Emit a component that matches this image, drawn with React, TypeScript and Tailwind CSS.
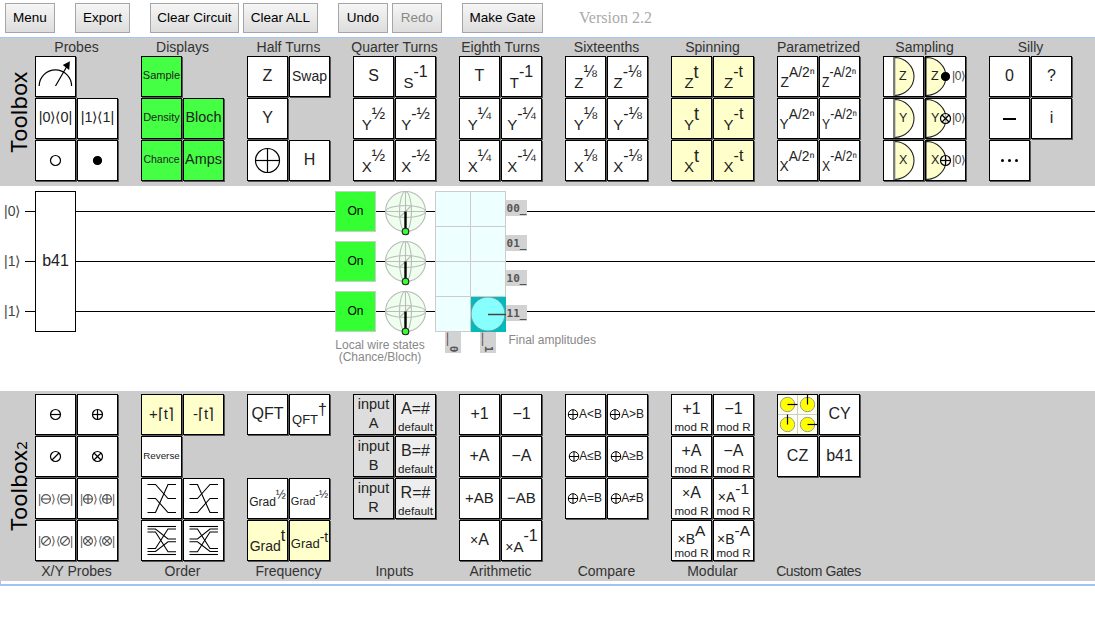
import React from 'react';

type Tone = 'white' | 'green' | 'yellow' | 'gray' | 'light';
type Cell = { node: React.ReactNode; tone?: Tone } | null;

const TONES: Record<Tone, string> = {
  white: 'bg-white',
  green: 'bg-[#44ff44]',
  yellow: 'bg-[#ffffcc]',
  gray: 'bg-[#dddddd]',
  light: 'bg-[#eeeeee]',
};

const SIZES: Record<number, string> = {
  9: 'text-[9.8px]',
  10: 'text-[10.5px]',
  11: 'text-[11px]',
  12: 'text-[12px]',
  13: 'text-[13px]',
  14: 'text-[14px]',
  14.5: 'text-[14.4px]',
  15: 'text-[15px]',
  16: 'text-[16px]',
  18: 'text-[18px]',
};

function Text({ children, size = 16 }: { children: React.ReactNode; size?: number }) {
  return <span className={`${SIZES[size]} -translate-y-px leading-none whitespace-pre`}>{children}</span>;
}

type Lift = 'normal' | 'low' | 'tight';

const BASE_SHIFT: Record<Lift, string> = {
  normal: 'translate-y-[5.5px]',
  low: 'translate-y-[5px]',
  tight: 'translate-y-[3px]',
};

const SUP_SHIFT: Record<Lift, string> = {
  normal: '-translate-y-[5px]',
  low: '-translate-y-[5px]',
  tight: '-translate-y-[4px]',
};

function Power({ base, sup, size = 15, supSize = size, lift = 'normal' }: { base: React.ReactNode; sup: React.ReactNode; size?: number; supSize?: number; lift?: Lift }) {
  return (
    <span className="flex items-center leading-none whitespace-pre">
      <span className={`${SIZES[size]} ${BASE_SHIFT[lift]}`}>{base}</span>
      <span className={`${SIZES[supSize]} ${SUP_SHIFT[lift]}`}>{sup}</span>
    </span>
  );
}

function Stack({ top, bottom, even }: { top: React.ReactNode; bottom: string; even?: boolean }) {
  return (
    <span className={`flex h-full flex-col items-center leading-none whitespace-nowrap ${even ? 'pt-px' : 'pt-[6px]'}`}>
      <span className={`flex items-center ${even ? 'h-[16px] text-[14.5px]' : 'h-[15px] text-[16px]'}`}>{top}</span>
      <span className={`flex items-center ${even ? 'h-[22px] text-[14.5px]' : 'mt-[5px] h-[12px] text-[11.6px]'}`}>{bottom}</span>
    </span>
  );
}

type Mark = 'empty' | 'full' | 'minus' | 'plus' | 'slash' | 'cross';

function MarkShape({ kind, cx, cy, r }: { kind: Mark; cx: number; cy: number; r: number }) {
  const d = r * 0.707;
  return (
    <g stroke="currentColor" strokeWidth="1.2" fill="none">
      <circle cx={cx} cy={cy} r={r} fill={kind === 'full' ? 'black' : 'white'} />
      {(kind === 'minus' || kind === 'plus') && <path d={`M${cx - r} ${cy}h${2 * r}`} />}
      {kind === 'plus' && <path d={`M${cx} ${cy - r}v${2 * r}`} />}
      {(kind === 'slash' || kind === 'cross') && <path d={`M${cx - d} ${cy + d}L${cx + d} ${cy - d}`} />}
      {kind === 'cross' && <path d={`M${cx - d} ${cy - d}L${cx + d} ${cy + d}`} />}
    </g>
  );
}

function Control({ kind, r = 5 }: { kind: Mark; r?: number }) {
  return (
    <svg width="39" height="39" viewBox="1 1 39 39" className="text-black">
      <MarkShape kind={kind} cx={20.5} cy={20.5} r={r} />
    </svg>
  );
}

function Meter() {
  return (
    <svg width="39" height="39" viewBox="1 1 39 39" fill="none" stroke="black">
      <path d="M4.200 30A16.200 16.200 0 0 1 36.600 30M20.500 30L31.500 11" strokeWidth="1.2" />
      <path d="M34.900 5.200L34.200 14L27.800 9Z" fill="black" stroke="none" />
    </svg>
  );
}

function Swaps({ lines }: { lines: number[][] }) {
  return (
    <svg width="39" height="39" viewBox="1 1 39 39" fill="none" stroke="black" strokeWidth="1.1">
      {lines.map(([a, b]) => (
        <path key={a} d={`M6.500 ${a}H14.500L27 ${b}H35`} />
      ))}
    </svg>
  );
}

function Sampler({ letter, mark }: { letter: string; mark?: Mark }) {
  const left = mark ? 1 : 11;
  return (
    <span className="relative block size-[39px]">
      <svg width="39" height="39" viewBox="1 1 39 39" className="block text-black">
        <path d={`M${left} 1.500A20 19 0 0 1 ${left} 39.500Z`} fill="#ffffcc" stroke="#222" strokeWidth="1.1" />
        {!mark && <path d="M11.500 1V40" stroke="#777" strokeWidth="1.6" />}
        {mark && (
          <g fillOpacity={mark === 'full' ? 1 : 0.6}>
            <MarkShape kind={mark} cx={20.5} cy={20.5} r={mark === 'full' ? 4 : 5} />
          </g>
        )}
      </svg>
      <span className={`absolute top-[13px] text-[12.5px] leading-none text-[#222] ${mark ? 'left-[5px]' : 'left-[15px]'}`}>{letter}</span>
      {mark && <span className="absolute top-[13px] left-[26px] text-[12px] leading-none tracking-[-0.4px] text-[#444]">|0⟩</span>}
    </span>
  );
}

function MatrixGate() {
  const dots = [
    [10.5, 10.5, 10, 0],
    [30.5, 10.5, 0, -10],
    [10.5, 30.5, 0, -10],
    [30.5, 30.5, 10, 0],
  ];
  return (
    <svg width="39" height="39" viewBox="1 1 39 39" fill="none">
      <path d="M0 0H41V41H0Z" fill="#fffff0" />
      <path d="M20.500 0V41M0 20.500H41" stroke="#ccc" />
      {dots.map(([x, y, dx, dy]) => (
        <g key={`${x}-${y}`}>
          <circle cx={x} cy={y} r="7.2" fill="yellow" stroke="#999" />
          <path d={`M${x} ${y}l${dx} ${dy}`} stroke="black" strokeWidth="1.2" />
        </g>
      ))}
    </svg>
  );
}

function Projector({ kind }: { kind: Mark }) {
  return (
    <span className="flex items-center text-[12px] leading-none text-[#555]">
      <span>|</span>
      <svg width="10" height="10" viewBox="0 0 10 10"><MarkShape kind={kind} cx={5} cy={5} r={4.4} /></svg>
      <span className="-mx-[0.5px]">⟩⟨</span>
      <svg width="10" height="10" viewBox="0 0 10 10"><MarkShape kind={kind} cx={5} cy={5} r={4.4} /></svg>
      <span>|</span>
    </span>
  );
}

const t = (s: React.ReactNode, size = 16, tone: Tone = 'white'): Cell => ({ node: <Text size={size}>{s}</Text>, tone });
const p = (base: React.ReactNode, sup: React.ReactNode, size = 15, tone: Tone = 'white', supSize = 16, lift: Lift = 'normal'): Cell => ({
  node: <Power base={base} sup={sup} size={size} supSize={supSize} lift={lift} />,
  tone,
});
const c = (kind: Mark, r = 5): Cell => ({ node: <Control kind={kind} r={r} /> });
const proj = (kind: Mark): Cell => ({ node: <Projector kind={kind} /> });
const sw = (lines: number[][]): Cell => ({ node: <Swaps lines={lines} /> });
const inp = (v: string): Cell => ({ node: <Stack top="input" bottom={v} even />, tone: 'gray' });
const def = (v: string): Cell => ({ node: <Stack top={v} bottom="default" />, tone: 'light' });
const mod = (v: React.ReactNode): Cell => ({ node: <Stack top={v} bottom="mod R" /> });
const oplus = (s: string): Cell => ({
  node: (
    <span className="flex -translate-x-[0.5px] items-center text-[12px] leading-none">
      <svg width="11" height="11" viewBox="0 0 11 11" fill="none" stroke="black"><circle cx="5.5" cy="5.5" r="4.800" /><path d="M5.500 0.500V10.500M0.500 5.500H10.500" /></svg>
      <span className="-translate-y-px">{s}</span>
    </span>
  ),
});
const times = (letter: string) => (
  <>
    <span className="text-[14px]">×</span>
    {letter}
  </>
);
const modPow = (base: string, sup: string) => (
  <span className="flex items-center">
    <span className="flex translate-y-[4px] text-[14px]">×{base}</span>
    <span className="-translate-y-[4px] text-[15.5px]">{sup}</span>
  </span>
);
const param = (base: string, negative: boolean): Cell => ({
  node: (
    <span className={negative ? 'scale-x-[0.81]' : 'scale-x-[0.92]'}>
      <Power base={base} sup={negative ? '-A/2ⁿ' : 'A/2ⁿ'} size={15} supSize={15} lift="low" />
    </span>
  ),
});

type Group = { name: string; cells: Cell[]; narrow?: boolean };

const TOP: Group[] = [
  { name: 'Probes', cells: [{ node: <Meter /> }, null, t('|0⟩⟨0|', 14.5), t('|1⟩⟨1|', 14.5), c('empty'), c('full', 4)] },
  { name: 'Displays', cells: [t('Sample', 11, 'green'), null, t('Density', 11, 'green'), t('Bloch', 14.5, 'green'), t('Chance', 10, 'green'), t('Amps', 14.5, 'green')] },
  { name: 'Half Turns', cells: [t('Z'), t('Swap', 14), t('Y'), null, c('plus', 12), t('H')] },
  { name: 'Quarter Turns', cells: [t('S'), p('S', '-1'), p('Y', '½'), p('Y', '-½'), p('X', '½'), p('X', '-½')] },
  { name: 'Eighth Turns', cells: [t('T'), p('T', '-1'), p('Y', '¼'), p('Y', '-¼'), p('X', '¼'), p('X', '-¼')] },
  { name: 'Sixteenths', cells: [p('Z', '⅛'), p('Z', '-⅛'), p('Y', '⅛'), p('Y', '-⅛'), p('X', '⅛'), p('X', '-⅛')] },
  { name: 'Spinning', cells: ['Z', 'Y', 'X'].flatMap((l) => [p(l, 't', 15, 'yellow', 18), p(l, '-t', 15, 'yellow')]) },
  { name: 'Parametrized', cells: ['Z', 'Y', 'X'].flatMap((l) => [param(l, false), param(l, true)]) },
  {
    name: 'Sampling',
    cells: [
      { node: <Sampler letter="Z" /> }, { node: <Sampler letter="Z" mark="full" /> },
      { node: <Sampler letter="Y" /> }, { node: <Sampler letter="Y" mark="cross" /> },
      { node: <Sampler letter="X" /> }, { node: <Sampler letter="X" mark="plus" /> },
    ],
  },
  {
    name: 'Silly',
    cells: [
      t('0'), t('?'),
      { node: <span className="h-[2px] w-[13px] bg-black" /> }, t('i'),
      { node: <span className="flex gap-[4px]">{[0, 1, 2].map((i) => <span key={i} className="size-[3px] rounded-full bg-black" />)}</span> }, null,
    ],
  },
];

const SHUFFLE = [[6.5, 6.5], [9, 19], [12, 31.7], [28.5, 9], [31.5, 21.7], [34.5, 34.5]];

const BOTTOM: Group[] = [
  { name: 'X/Y Probes', cells: [c('minus'), c('plus'), c('slash'), c('cross'), proj('minus'), proj('plus'), proj('slash'), proj('cross')] },
  {
    name: 'Order',
    cells: [
      t('+⌈t⌉', 15, 'yellow'), t('-⌈t⌉', 15, 'yellow'), t('Reverse', 9), null,
      sw([[6.5, 20.5], [20.5, 34.5], [34.5, 6.5]]), sw([[6.5, 34.5], [20.5, 6.5], [34.5, 20.5]]),
      sw(SHUFFLE), sw(SHUFFLE.map(([a, b]) => [b, a])),
    ],
  },
  {
    name: 'Frequency',
    cells: [
      t('QFT'), p('QFT', '†', 13, 'white', 16, 'low'), null, null,
      p('Grad', '½', 12, 'white', 12, 'tight'), p('Grad', '-½', 11, 'white', 11, 'tight'),
      p('Grad', 't', 14, 'yellow', 16, 'low'), p('Grad', '-t', 13, 'yellow', 14, 'tight'),
    ],
  },
  { name: 'Inputs', cells: [inp('A'), def('A=#'), inp('B'), def('B=#'), inp('R'), def('R=#')] },
  { name: 'Arithmetic', cells: [t('+1'), t('−1'), t('+A'), t('−A'), t('+AB', 15), t('−AB', 15), t(times('A')), p(times('A'), '-1', 15)] },
  { name: 'Compare', cells: ['A<B', 'A>B', 'A≤B', 'A≥B', 'A=B', 'A≠B'].map(oplus) },
  { name: 'Modular', cells: [mod('+1'), mod('−1'), mod('+A'), mod('−A'), mod(<span>{times('A')}</span>), mod(modPow('A', '-1')), mod(modPow('B', 'A')), mod(modPow('B', '-A'))] },
  { name: 'Custom Gates', narrow: true, cells: [{ node: <MatrixGate /> }, t('CY'), t('CZ'), t('b41')] },
];

function Gate({ cell }: { cell: Cell }) {
  if (!cell) return <span className="size-[41px]" />;
  return (
    <span className={`flex size-[41px] items-center justify-center border border-black text-[#222] shadow-[1px_1px_0_#555] ${TONES[cell.tone ?? 'white']}`}>
      {cell.node}
    </span>
  );
}

function Gates({ cells }: { cells: Cell[] }) {
  return (
    <div className="grid grid-cols-[41px_41px] gap-px">
      {cells.map((cell, i) => <Gate key={i} cell={cell} />)}
    </div>
  );
}

function Heading({ group }: { group: Group }) {
  return (
    <h2 className={`flex h-[19px] items-center justify-center text-[14px] whitespace-nowrap text-[#333] ${group.narrow ? 'tracking-[-0.4px]' : ''}`}>
      {group.name}
    </h2>
  );
}

function SideLabel({ sub }: { sub?: string }) {
  return (
    <div className="flex w-[35px] shrink-0 items-center justify-center">
      <span className="-rotate-90 font-['Noto_Sans'] text-[22px] leading-none whitespace-nowrap">
        Toolbox{sub && <span className="text-[15px]">{sub}</span>}
      </span>
    </div>
  );
}

function Button({ label, width, disabled }: { label: string; width: string; disabled?: boolean }) {
  return (
    <button disabled={disabled} className={`h-[30px] shrink-0 border border-[#a6a6a6] bg-linear-to-b from-[#f6f6f6] to-[#dddddd] pt-px text-[13.5px] whitespace-nowrap ${width} ${disabled ? 'text-[#888888]' : 'text-black'}`}>
      {label}
    </button>
  );
}

function Bloch() {
  return (
    <svg width="42" height="46" viewBox="0 0 42 46" fill="none" stroke="#bbb" strokeWidth="1.1">
      <circle cx="21.500" cy="20.500" r="20" fill="#eeffee" />
      <ellipse cx="21.500" cy="20.500" rx="20" ry="6" />
      <ellipse cx="21.500" cy="20.500" rx="6" ry="20" />
      <path d="M1.500 20.500H41.500M21.500 0.500V40.500M15.500 26.500L27.500 14.500" />
      <path d="M21.500 20.500V40" stroke="black" strokeWidth="2.400" />
      <circle cx="21.500" cy="40.500" r="3.300" fill="#33ff33" stroke="#222" />
    </svg>
  );
}

function WireState() {
  return (
    <div className="flex h-[50px] items-start">
      <span className="flex size-[41px] items-center justify-center border border-[#ccc] bg-[#33ff33] pb-px text-[12px]">On</span>
      <span className="ml-[8px]"><Bloch /></span>
    </div>
  );
}

function StateTag({ text, vertical }: { text: string; vertical?: boolean }) {
  return (
    <span className={`flex items-center justify-center bg-[#d2d2d2] font-['DejaVu_Sans_Mono'] text-[11px] leading-none font-bold text-[#555] ${vertical ? 'h-[21px] w-[16px]' : 'h-[16px] w-[21px]'}`}>
      <span className={vertical ? 'translate-x-px rotate-90' : ''}>{text}</span>
    </span>
  );
}

function Amplitudes() {
  return (
    <div className="flex items-start">
      <div className="flex flex-col">
        <div className="grid grid-cols-[35px_35px] grid-rows-[35px_35px_35px_35px] border-t border-l border-[#ccc]">
          {[0, 1, 2, 3, 4, 5, 6].map((i) => <span key={i} className="border-r border-b border-[#ccc] bg-[#eeffff]" />)}
          <svg width="35" height="35" viewBox="0 0 35 35">
            <path d="M0 0H35V35H0Z" fill="#00bbbb" />
            <circle cx="17" cy="17" r="17" fill="#88ffff" stroke="#6a9a9a" />
            <path d="M17 17.500H35" stroke="#444" strokeWidth="1.500" />
          </svg>
        </div>
        <div className="flex gap-[19px] pl-[10px]">
          <StateTag text="__0" vertical />
          <StateTag text="__1" vertical />
        </div>
      </div>
      <div className="flex flex-col gap-[19px] pt-[9px]">
        {['00_', '01_', '10_', '11_'].map((s) => <StateTag key={s} text={s} />)}
      </div>
    </div>
  );
}

function Circuit() {
  return (
    <section className="relative flex h-[205px] items-start bg-white">
      <svg className="absolute top-0 left-0" width="1095" height="205" viewBox="0 0 1095 205" stroke="black">
        <path d="M25 25.500H1095M25 75.500H1095M25 125.500H1095" />
      </svg>
      <div className="relative flex w-[35px] flex-col pl-[4px] text-[14px] text-[#444]">
        {['|0⟩', '|1⟩', '|1⟩'].map((s, i) => (
          <span key={i} className="flex h-[50px] w-[20px] items-center">{s}</span>
        ))}
      </div>
      <div className="relative mt-[5px] flex h-[141px] w-[41px] items-center justify-center border border-black bg-white pb-[2px] text-[16px] text-[#222]">b41</div>
      <div className="relative ml-[259px] flex w-[100px] flex-col pt-[5px]">
        <WireState />
        <WireState />
        <WireState />
        <p className="-mt-[2px] w-[90px] text-center text-[12px] leading-[12px] whitespace-nowrap text-[#888]">Local wire states<br />(Chance/Bloch)</p>
      </div>
      <div className="relative pt-[5px]"><Amplitudes /></div>
      <p className="relative -ml-[18.5px] pt-[147px] text-[12px] leading-[14px] text-[#888]">Final amplitudes</p>
    </section>
  );
}

export default function App() {
  return (
    <main className="h-[622px] w-[1095px] overflow-hidden bg-white font-['Liberation_Sans',Arial,sans-serif] text-black">
      <header className="flex h-[37px] pt-[3px] pl-[5px]">
        <Button label="Menu" width="w-[50px]" />
        <span className="w-[20px]" />
        <Button label="Export" width="w-[55px]" />
        <span className="w-[20px]" />
        <Button label="Clear Circuit" width="w-[89px]" />
        <span className="w-[4px]" />
        <Button label="Clear ALL" width="w-[75px]" />
        <span className="w-[20px]" />
        <Button label="Undo" width="w-[50px]" />
        <span className="w-[4px]" />
        <Button label="Redo" width="w-[50px]" disabled />
        <span className="w-[20px]" />
        <Button label="Make Gate" width="w-[81px]" />
        <span className="ml-[36px] pt-[3px] font-['Liberation_Serif',serif] text-[16px] text-[#aaa]">Version 2.2</span>
      </header>
      <section className="flex h-[149px] border-t border-[#a8c4f8] bg-[#cccccc]">
        <SideLabel />
        <div className="flex gap-[23px]">
          {TOP.map((g) => (
            <div key={g.name} className="flex w-[83px] flex-col">
              <div className="h-[18px]"><Heading group={g} /></div>
              <Gates cells={g.cells} />
            </div>
          ))}
        </div>
      </section>
      <Circuit />
      <section className="flex h-[190px] bg-[#cccccc]">
        <SideLabel sub="2" />
        <div className="flex gap-[23px] pt-[3px]">
          {BOTTOM.map((g) => (
            <div key={g.name} className="flex w-[83px] flex-col">
              <div className="h-[168px]"><Gates cells={g.cells} /></div>
              <Heading group={g} />
            </div>
          ))}
        </div>
      </section>
      <div className="h-[5px] border-b-2 border-l border-[#a4c2f6]" />
    </main>
  );
}
